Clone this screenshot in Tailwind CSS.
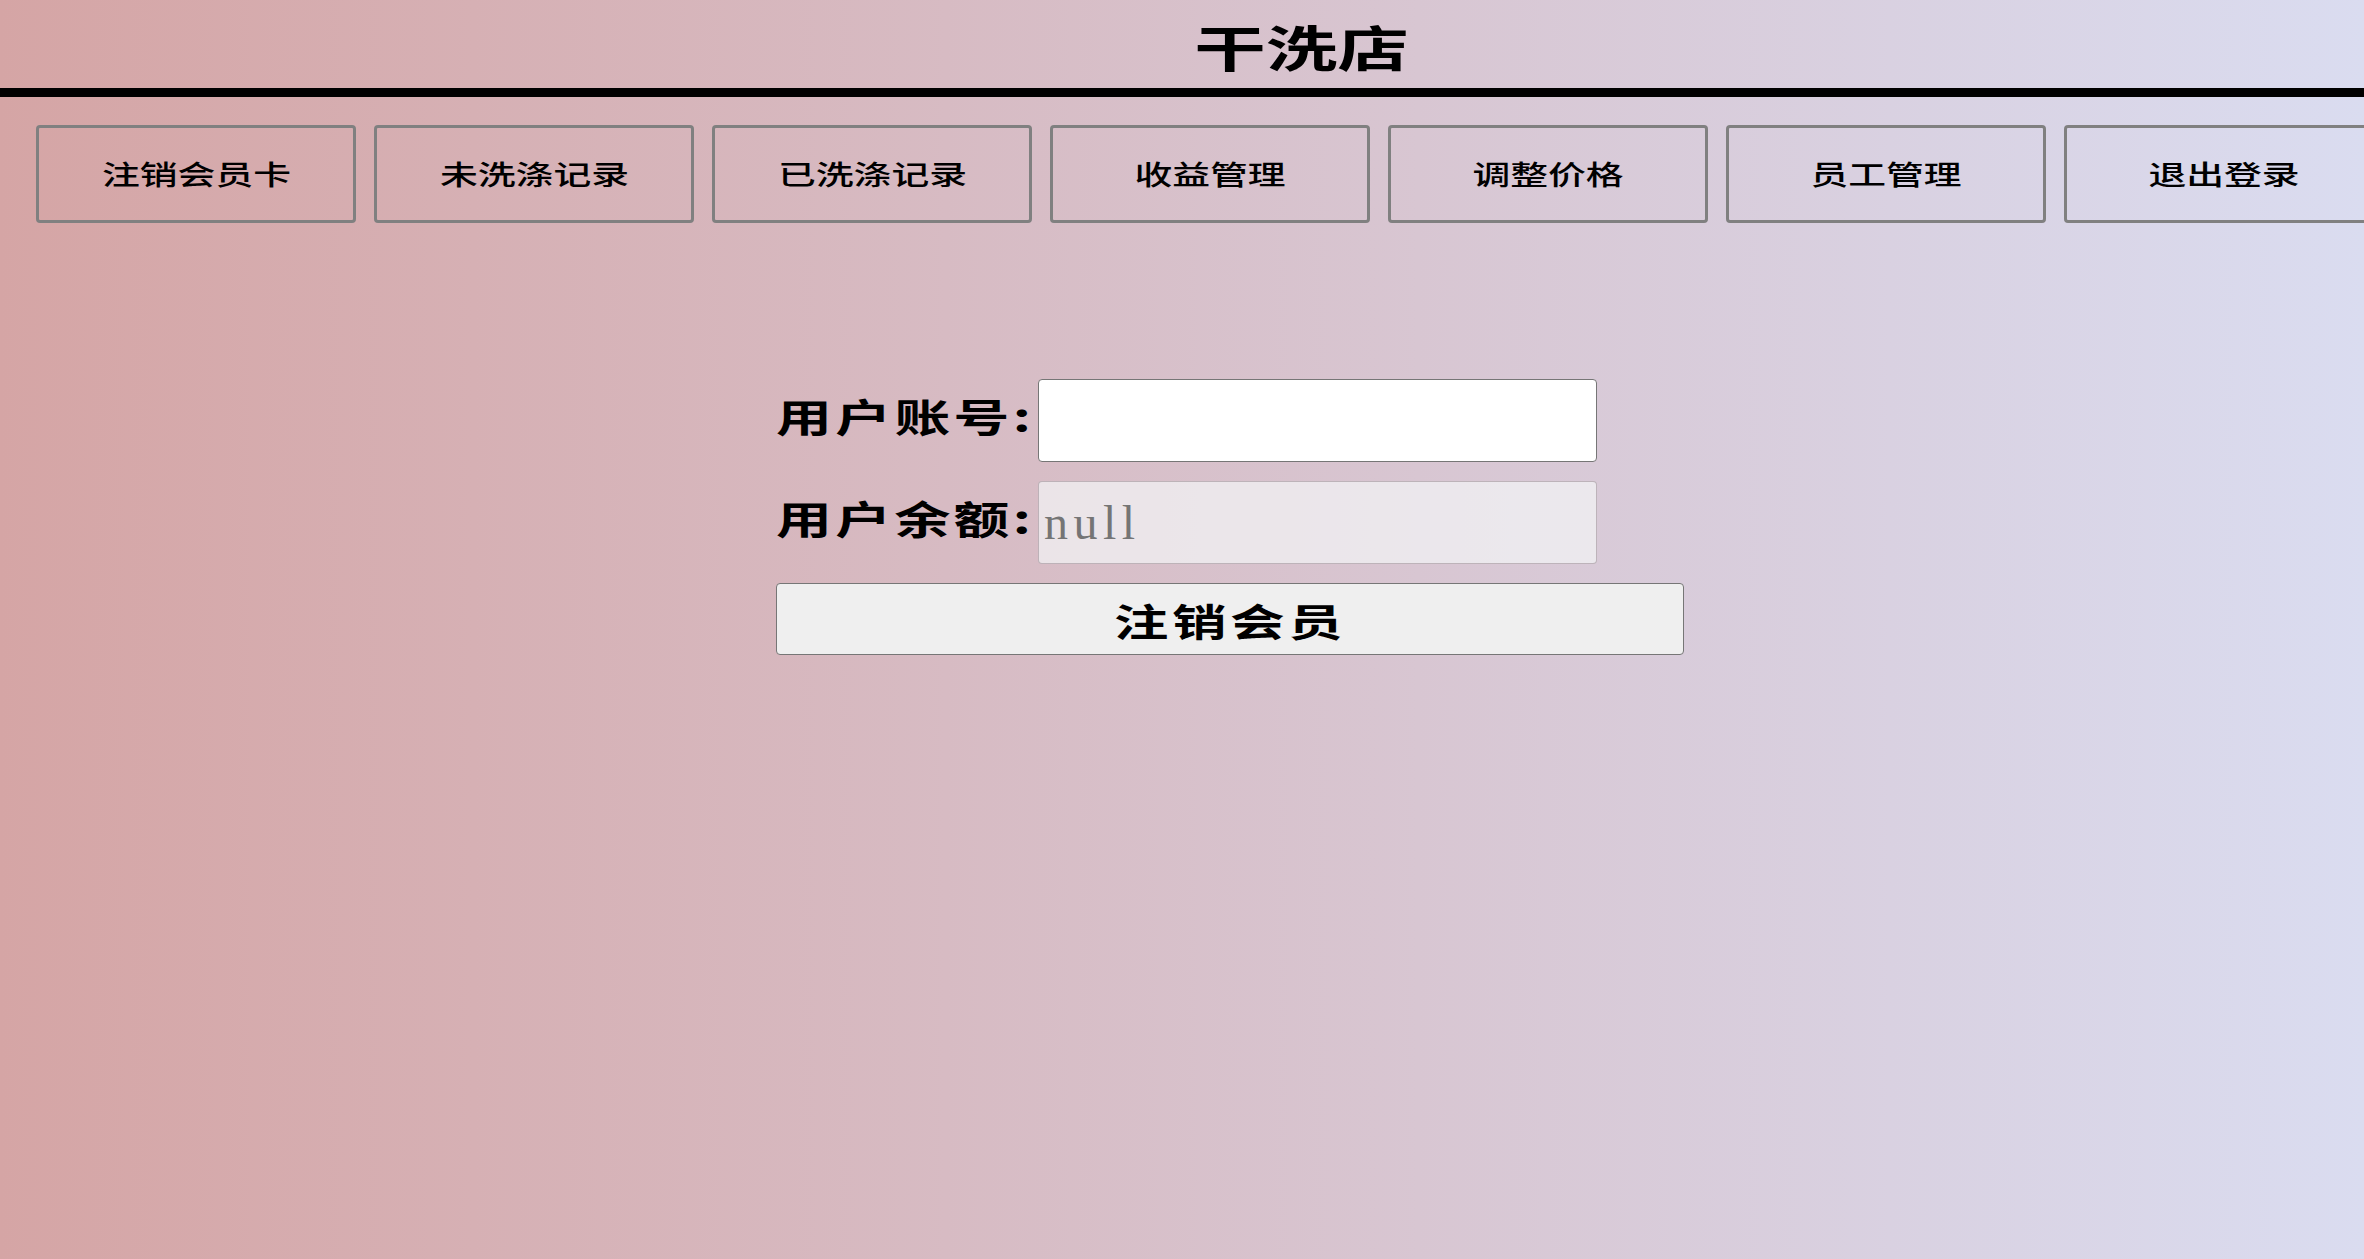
<!DOCTYPE html>
<html lang="zh-CN">
<head>
<meta charset="utf-8">
<title>干洗店</title>
<script src="https://cdn.jsdelivr.net/npm/@tailwindcss/browser@4"></script>
</head>
<body class="overflow-hidden">
<div class="h-[1259px] w-full overflow-hidden bg-[linear-gradient(to_right,#d5a5a5,#dadcf0)] font-['Noto_Sans_CJK_SC','Noto_Sans_CJK_TC',sans-serif] text-black">
  <div class="w-[2604px]">
    <header class="flex h-[97px] items-center justify-center border-b-[9px] border-black pt-[3px]">
      <h1 class="inline-block scale-x-[1.46] text-[49px] leading-none font-bold">干洗店</h1>
    </header>
    <nav class="mt-[28px] flex gap-[18px] pl-[36px]">
      <button class="flex h-[98px] w-[320px] shrink-0 items-center justify-center rounded-[4px] border-[3px] border-[#808080]"><span class="inline-block scale-x-[1.4] text-[27px] font-medium">注销会员卡</span></button>
      <button class="flex h-[98px] w-[320px] shrink-0 items-center justify-center rounded-[4px] border-[3px] border-[#808080]"><span class="inline-block scale-x-[1.4] text-[27px] font-medium">未洗涤记录</span></button>
      <button class="flex h-[98px] w-[320px] shrink-0 items-center justify-center rounded-[4px] border-[3px] border-[#808080]"><span class="inline-block scale-x-[1.4] text-[27px] font-medium">已洗涤记录</span></button>
      <button class="flex h-[98px] w-[320px] shrink-0 items-center justify-center rounded-[4px] border-[3px] border-[#808080]"><span class="inline-block scale-x-[1.4] text-[27px] font-medium">收益管理</span></button>
      <button class="flex h-[98px] w-[320px] shrink-0 items-center justify-center rounded-[4px] border-[3px] border-[#808080]"><span class="inline-block scale-x-[1.4] text-[27px] font-medium">调整价格</span></button>
      <button class="flex h-[98px] w-[320px] shrink-0 items-center justify-center rounded-[4px] border-[3px] border-[#808080]"><span class="inline-block scale-x-[1.4] text-[27px] font-medium">员工管理</span></button>
      <button class="flex h-[98px] w-[320px] shrink-0 items-center justify-center rounded-[4px] border-[3px] border-[#808080]"><span class="inline-block scale-x-[1.4] text-[27px] font-medium">退出登录</span></button>
    </nav>
    <form class="mt-[156px] ml-[776px] flex w-[908px] flex-col">
      <div class="flex h-[83px] items-center">
        <label class="w-[262px] shrink-0 pb-[10px]"><span class="inline-block origin-left scale-x-[1.43] text-[39px] font-bold tracking-[2.4px] whitespace-nowrap">用户账号:</span></label>
        <input type="text" class="h-[83px] w-[559px] rounded-[4px] border border-[#767676] bg-white px-[5px] text-[48px]">
      </div>
      <div class="mt-[19px] flex h-[83px] items-center">
        <label class="w-[262px] shrink-0 pb-[10px]"><span class="inline-block origin-left scale-x-[1.43] text-[39px] font-bold tracking-[2.4px] whitespace-nowrap">用户余额:</span></label>
        <input type="text" disabled placeholder="null" class="h-[83px] w-[559px] rounded-[4px] border border-[#a89ca2]/70 bg-[#f3f5f7]/70 px-[5px] font-['Liberation_Serif',serif] text-[48px] tracking-[5.5px] placeholder:text-[#757575]">
      </div>
      <button type="button" class="mt-[19px] flex h-[72px] w-[908px] items-center justify-center rounded-[4px] border border-[#767676] bg-[#efefef]"><span class="inline-block scale-x-[1.43] text-[38px] font-bold tracking-[2.6px]">注销会员</span></button>
    </form>
  </div>
</div>
</body>
</html>
